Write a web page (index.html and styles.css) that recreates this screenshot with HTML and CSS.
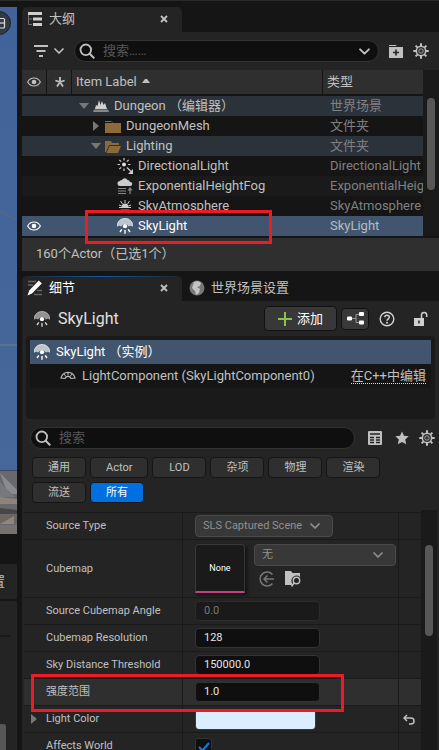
FILE: index.html
```html
<!DOCTYPE html>
<html lang="zh-CN">
<head>
<meta charset="utf-8">
<meta name="viewport" content="width=device-width, initial-scale=1">
<title>大纲</title>
<link rel="stylesheet" href="styles.css">
</head>
<body>
<svg class="defs" aria-hidden="true">
  <symbol id="i-skylight" viewBox="0 0 16 16">
    <path d="M0 8.500C.3 3.500 3.500.5 8 .5s7.700 3 8 8l-2.200-.7-1.800.7-1-.8a3.400 3.400 0 0 0-6 0l-1 .8-1.800-.7z" fill="currentColor" opacity=".65"/>
    <path d="M0 8.500C.3 3.500 3.500.5 8 .5s7.700 3 8 8" fill="none" stroke="currentColor" stroke-width="1" opacity=".7"/>
    <circle cx="8" cy="8.200" r="2.100" fill="#fff"/>
    <path d="M8 12v3.700M4.800 11.300l-1.800 2.700M11.200 11.300l1.800 2.700" stroke="currentColor" stroke-width="1.400"/>
  </symbol>
  <symbol id="i-search" viewBox="0 0 16 16"><circle cx="6.800" cy="6.800" r="5.300" fill="none" stroke="currentColor" stroke-width="1.800"/><path d="M10.700 10.700l4 4" stroke="currentColor" stroke-width="2" stroke-linecap="round"/></symbol>
  <symbol id="i-chevron" viewBox="0 0 10 6"><path d="M1 1l4 4 4-4" fill="none" stroke="currentColor" stroke-width="1.700" stroke-linecap="round" stroke-linejoin="round"/></symbol>
  <symbol id="i-gear" viewBox="0 0 16 16">
    <path d="M8 .3v3M8 12.700v3M.3 8h3M12.700 8h3M2.600 2.600l2 2M11.400 11.400l2 2M2.600 13.400l2-2M11.400 4.600l2-2" stroke="currentColor" stroke-width="2"/>
    <circle cx="8" cy="8" r="4.700" fill="#333" stroke="currentColor" stroke-width="1.500"/><circle cx="8" cy="8" r="2.200" fill="none" stroke="currentColor" stroke-width="1" opacity=".7"/>
  </symbol>
  <symbol id="i-eye" viewBox="0 0 14 10"><path d="M.6 5C3.500-.3 10.500-.3 13.400 5 10.500 10.300 3.500 10.300.6 5z" fill="none" stroke="currentColor" stroke-width="1.100"/><circle cx="7" cy="5" r="2.300" fill="currentColor"/></symbol>
  <symbol id="i-close" viewBox="0 0 8 8"><path d="M1 1l6 6M7 1L1 7" stroke="currentColor" stroke-width="1.900"/></symbol>
</svg>

<div class="app">
  <aside class="side">
    <div class="viewport">
      <button class="view-btn" aria-label="视口布局"><svg width="14" height="14" viewBox="0 0 14 14"><rect x="1.500" y="2.500" width="10" height="9.500" rx="1" fill="none" stroke="#ddd" stroke-width="1.200"/><path d="M2 7h9.500" stroke="#ddd" stroke-width="1.200"/></svg></button>
      <svg class="scene" viewBox="0 0 17 527" preserveAspectRatio="none" aria-hidden="true">
        <path d="M0 204L17 213" stroke="#646970" stroke-width="1"/><path d="M0 338h17" stroke="#60708a" stroke-width="2"/>
        <path d="M0 463h17v64H0z" fill="#68686e"/><path d="M0 463h17v1H0z" fill="#3d4860"/>
        <path d="M0 466l17 17v4H8z" fill="#8a8b91"/><path d="M0 475l15 15H0z" fill="#77777e"/>
        <path d="M0 490l17 2v5H0z" fill="#8d857b"/><path d="M0 501l17 2v4H0z" fill="#4a4643"/>
        <path d="M0 508h17v9H0z" fill="#6b655f"/><path d="M0 517l14-8v8z" fill="#8f857b"/><path d="M0 518h17v9H0z" fill="#777170"/>
      </svg>
    </div>
    <div class="side-title">置</div>
    <div class="side-panel"><div class="side-block"></div><div class="side-thumb"></div></div>
  </aside>

  <main class="main">
    <section class="outliner">
      <div class="tabs">
        <div class="tab">
          <svg width="16" height="16" viewBox="0 0 16 16"><path d="M1 1h14v3H1zM6 6.500h9v3H6zM6 12h9v3H6z" fill="#d0d0d0"/><path d="M1.500 4v9.500H5M1.500 8H5" fill="none" stroke="#777"/></svg>
          <span>大纲</span>
          <button class="close" aria-label="关闭大纲"><svg width="8" height="8"><use href="#i-close"/></svg></button>
        </div>
      </div>
      <div class="toolbar">
        <button class="icon-btn filter" aria-label="筛选"><svg width="16" height="14" viewBox="0 0 16 14"><path d="M1 2h14M3.500 7h9M6 12h4" stroke="currentColor" stroke-width="2"/></svg><svg width="10" height="6"><use href="#i-chevron"/></svg></button>
        <label class="search"><svg width="16" height="16"><use href="#i-search"/></svg><input type="text" placeholder="搜索……" aria-label="搜索大纲"><svg width="11" height="7"><use href="#i-chevron"/></svg></label>
        <button class="icon-btn" aria-label="新建文件夹"><svg width="14" height="14" viewBox="0 0 14 14"><path d="M0 1h7l1 2h6v11H0z" fill="currentColor"/><path d="M0 2.500h8" stroke="#242424"/><path d="M7 5.500v6M4 8.500h6" stroke="#222" stroke-width="1.600"/></svg></button>
        <button class="icon-btn" aria-label="设置"><svg width="16" height="16"><use href="#i-gear"/></svg></button>
      </div>
      <div class="list">
        <table class="actors">
          <thead><tr>
            <th class="c-eye"><svg width="14" height="10"><use href="#i-eye"/></svg></th>
            <th class="c-pin"><svg width="10" height="10" viewBox="0 0 10 10"><path d="M5 0v5M.4 3.500L5 5l4.600-1.500M2 9.500L5 5l3 4.500" fill="none" stroke="currentColor" stroke-width="1.800"/></svg></th>
            <th class="c-label">Item Label <svg class="sort" width="8" height="4" viewBox="0 0 8 4"><path d="M0 4l3-4h2l3 4z" fill="currentColor"/></svg></th>
            <th class="c-type">类型</th>
          </tr></thead>
          <tbody>
            <tr class="group"><td></td><td></td><td><div class="item"><svg width="10" height="6" viewBox="0 0 10 6"><path d="M0 0h10L5 6z" fill="#777"/></svg><svg width="16" height="14" viewBox="0 0 16 14"><path d="M2 10l1-4 1.500 1L6 1l1.500 5L9 2l1.500 4L12 4l2 6z" fill="#d0d0d0"/><path d="M1 10.500h14l1 2.500H0z" fill="#888"/></svg><span>Dungeon （编辑器）</span></div></td><td class="type">世界场景</td></tr>
            <tr><td></td><td></td><td><div class="item lv1"><svg width="10" height="10" viewBox="0 0 10 10"><path d="M2 0l6 5-6 5z" fill="#777"/></svg><svg width="16" height="13" viewBox="0 0 16 13"><path d="M0 1h6l2 2h8v10H0z" fill="#8b6b3c"/><path d="M0 2.500h7" stroke="#151515"/></svg><span>DungeonMesh</span></div></td><td class="type">文件夹</td></tr>
            <tr class="group"><td></td><td></td><td><div class="item lv1"><svg width="10" height="6" viewBox="0 0 10 6"><path d="M0 0h10L5 6z" fill="#777"/></svg><svg width="16" height="13" viewBox="0 0 16 13"><path d="M0 1h6l1 2h7v2H4L1 12H0z" fill="#8b6b3c"/><path d="M4.500 6H16l-3 7H1.500z" fill="#8b6b3c"/></svg><span>Lighting</span></div></td><td class="type">文件夹</td></tr>
            <tr><td></td><td></td><td><div class="item lv2"><svg width="16" height="16" viewBox="0 0 16 16"><circle cx="7" cy="6.500" r="2" fill="#ddd"/><path d="M7 0v2.500M7 10.500v2.500M.5 6.500H3M11 6.500h2.500M2.300 1.800l1.900 1.900M11.700 1.800L9.800 3.700M2.300 11.200l1.900-1.900M10 9.500l4.500 4.500" stroke="#ccc" stroke-width="1.200"/><path d="M16 11v5h-5z" fill="#ccc"/></svg><span>DirectionalLight</span></div></td><td class="type">DirectionalLight</td></tr>
            <tr class="alt"><td></td><td></td><td><div class="item lv2"><svg width="16" height="16" viewBox="0 0 16 16"><path d="M3 8a2.500 2.500 0 0 1 0-5 2 2 0 0 1 2-1 3 3 0 0 1 5.500 0A2.500 2.500 0 0 1 13 4a2 2 0 0 1 .5 4z" fill="#ccc"/><path d="M1 10.500h8M1 13h8M1 15.500h8M13 16v-5" stroke="#888" stroke-width="1.200"/><path d="M10.500 12.500L13 9l2.500 3.500z" fill="#888"/></svg><span>ExponentialHeightFog</span></div></td><td class="type">ExponentialHeightFog</td></tr>
            <tr><td></td><td></td><td><div class="item lv2"><svg width="16" height="16" viewBox="0 0 16 16"><path d="M4.500 9a3.500 3.500 0 0 1 7 0z" fill="#ccc"/><path d="M8 2v3M3.500 3l2 3M12.500 3l-2 3M2 7l2.500 1M14 7l-2.500 1M2 9.500h12" stroke="#ccc" stroke-width="1"/><path d="M4 11.500h8l3 2.500H1z" fill="#999"/></svg><span>SkyAtmosphere</span></div></td><td class="type">SkyAtmosphere</td></tr>
            <tr class="selected"><td class="c-eye"><svg width="14" height="10"><use href="#i-eye"/></svg></td><td></td><td class="marked"><div class="item lv2"><svg width="16" height="16"><use href="#i-skylight"/></svg><span>SkyLight</span></div><i class="mark mark-actor"></i></td><td class="type">SkyLight</td></tr>
          </tbody>
        </table>
        <div class="scroll"><div class="thumb"></div></div>
      </div>
      <div class="status">160个Actor（已选1个）</div>
    </section>

    <section class="details">
      <div class="tabs">
        <div class="tab active">
          <svg width="16" height="16" viewBox="0 0 16 16"><path d="M1 1.500h8M1 5h5M10 10.500h5M7 14.500h8" stroke="#666" stroke-width="1.500"/><path d="M11.800.5l3 3L5 13.500.5 15.500l1.700-5z" fill="#fff"/></svg>
          <span>细节</span>
          <button class="close" aria-label="关闭细节"><svg width="8" height="8"><use href="#i-close"/></svg></button>
        </div>
        <div class="tab idle">
          <svg width="16" height="16" viewBox="0 0 16 16"><circle cx="8" cy="8" r="7.500" fill="#777"/><path d="M5 2l4-1 3 2-1 3-3 1 3 2-1 4-3 2-1-4-3-3z" fill="#c4c4c4"/></svg>
          <span>世界场景设置</span>
        </div>
      </div>
      <div class="object">
        <svg width="16" height="16"><use href="#i-skylight"/></svg>
        <h1>SkyLight</h1>
        <button class="btn add"><svg width="14" height="14" viewBox="0 0 14 14"><path d="M7 0v14M0 7h14" stroke="#8bc34a" stroke-width="2"/></svg>添加</button>
        <button class="btn graph" aria-label="编辑蓝图"><svg width="17" height="13" viewBox="0 0 17 13"><path d="M4 6.500h5M13 2.500H9v8h4" fill="none" stroke="#999"/><rect y="4.500" width="5" height="4" rx="1" fill="#fff"/><rect x="12" width="5" height="4" rx="1" fill="#fff"/><rect x="12" y="8.500" width="5" height="4" rx="1" fill="#fff"/></svg></button>
        <button class="icon-btn help" aria-label="帮助"><svg width="16" height="16" viewBox="0 0 16 16"><circle cx="8" cy="8" r="6.800" fill="none" stroke="currentColor" stroke-width="1.400"/><path d="M5.800 6.300C5.800 3.400 10.300 3.500 10.300 6.200 10.300 7.800 8 7.800 8 9.700" fill="none" stroke="currentColor" stroke-width="1.500"/><circle cx="8" cy="11.800" r="1" fill="currentColor"/></svg></button>
        <button class="icon-btn lock" aria-label="锁定"><svg width="15" height="16" viewBox="0 0 15 16"><path d="M1 7h10v8H1z" fill="currentColor"/><path d="M8.500 7V4a2.600 2.600 0 0 1 5.200 0v2" fill="none" stroke="currentColor" stroke-width="1.500"/><path d="M6 9.500v3" stroke="#222" stroke-width="1.500"/></svg></button>
      </div>
      <div class="components">
        <div class="comp on"><svg width="16" height="16"><use href="#i-skylight"/></svg><span>SkyLight （实例）</span></div>
        <div class="comp child"><svg width="16" height="10" viewBox="0 0 16 10"><path d="M1 7C3-.5 13-.5 15 7l-4 .5a3.200 3.200 0 0 0-6 0z" fill="none" stroke="#bbb" stroke-width="1.100"/><path d="M4 3l2 2.500M8 1.500v3M12 3l-2 2.500" stroke="#bbb"/></svg><span>LightComponent (SkyLightComponent0)</span><a href="#">在C++中编辑</a></div>
      </div>
      <div class="find">
        <label class="search"><svg width="16" height="16"><use href="#i-search"/></svg><input type="text" placeholder="搜索" aria-label="搜索细节"></label>
        <button class="icon-btn" aria-label="属性矩阵"><svg width="14" height="14" viewBox="0 0 14 14"><rect width="14" height="14" rx="1" fill="currentColor"/><path d="M2 3h10M2 6.500h4M8 6.500h4M2 9h4M8 9h4M2 11.500h4M8 11.500h4" stroke="#242424" stroke-width="1.300"/></svg></button>
        <button class="icon-btn" aria-label="收藏"><svg width="14" height="14" viewBox="0 0 14 14"><path d="M7 .5l2 4.300 4.700.5-3.500 3.200 1 4.800L7 11l-4.200 2.300 1-4.800L.3 5.300 5 4.800z" fill="currentColor"/></svg></button>
        <button class="icon-btn" aria-label="细节设置"><svg width="16" height="16"><use href="#i-gear"/></svg></button>
      </div>
      <div class="filters">
        <button>通用</button><button>Actor</button><button>LOD</button><button>杂项</button><button>物理</button><button>渲染</button><button>流送</button><button class="on">所有</button>
      </div>
      <div class="list">
        <table class="props">
          <tbody>
            <tr><th><label for="source">Source Type</label></th><td><div class="combo source"><select id="source"><option>SLS Captured Scene</option></select><svg width="10" height="6"><use href="#i-chevron"/></svg></div></td><td class="reset"></td></tr>
            <tr class="tall"><th><label for="cube">Cubemap</label></th><td><div class="asset"><div class="thumbnail">None</div><div class="asset-side"><div class="combo"><select id="cube"><option>无</option></select><svg width="10" height="6"><use href="#i-chevron"/></svg></div>
              <div class="asset-btns"><button class="icon-btn dim" aria-label="使用所选资产"><svg width="16" height="16" viewBox="0 0 16 16"><path d="M13.500 3.500A7 7 0 1 0 13.500 12.500M15 8H5M8.500 4.500L5 8l3.500 3.500" fill="none" stroke="currentColor" stroke-width="1.500"/></svg></button><button class="icon-btn" aria-label="浏览资产"><svg width="16" height="16" viewBox="0 0 16 16"><path d="M0 0h6l1.500 2H15v4a5 5 0 0 0-7 7.500L6.500 14H0z" fill="currentColor"/><circle cx="11.500" cy="9.500" r="3.200" fill="#242424" stroke="currentColor" stroke-width="1.400"/><path d="M9.200 11.800L6.500 15.500" stroke="currentColor" stroke-width="1.500"/></svg></button></div></div></div></td><td class="reset"></td></tr>
            <tr><th><label for="angle">Source Cubemap Angle</label></th><td><input class="num" id="angle" type="text" value="0.0" disabled></td><td class="reset"></td></tr>
            <tr><th><label for="res">Cubemap Resolution</label></th><td><input class="num" id="res" type="text" value="128"></td><td class="reset"></td></tr>
            <tr><th><label for="dist">Sky Distance Threshold</label></th><td><input class="num" id="dist" type="text" value="150000.0"></td><td class="reset"></td></tr>
            <tr class="hover"><th class="marked"><label for="intensity">强度范围</label><i class="mark mark-prop"></i></th><td><input class="num" id="intensity" type="text" value="1.0"></td><td class="reset"></td></tr>
            <tr><th class="expand"><svg width="6" height="10" viewBox="0 0 6 10"><path d="M0 0l6 5-6 5z" fill="#777"/></svg><label for="color">Light Color</label></th><td><input class="color" id="color" type="color" value="#dbeeff"></td><td class="reset"><button class="icon-btn" aria-label="重置"><svg width="12" height="11" viewBox="0 0 12 11"><path d="M4 1L1 4l3 3M1 4h7a3 3 0 0 1 0 6H6" fill="none" stroke="currentColor" stroke-width="1.500"/></svg></button></td></tr>
            <tr><th><label for="world">Affects World</label></th><td><div class="check"><input id="world" type="checkbox" checked><svg width="12" height="10" viewBox="0 0 12 10"><path d="M1 5l3.500 3.500L11 1" fill="none" stroke="#0c78e8" stroke-width="2.200"/></svg></div></td><td class="reset"></td></tr>
          </tbody>
        </table>
        <div class="scroll"><div class="thumb"></div></div>
      </div>
    </section>
  </main>
</div>
</body>
</html>
```

FILE: styles.css
```css
* { box-sizing: border-box; }

body {
  margin: 0;
  background: #151515;
  color: #c0c0c0;
  font: 13px/20px Roboto, "Noto Sans CJK SC", sans-serif;
}

button, input, select { font: inherit; color: inherit; }
button { border: 0; padding: 0; background: none; }
svg { display: block; flex: none; }
.defs { position: absolute; width: 0; height: 0; }

.app {
  display: flex;
  gap: 5px;
  height: 100vh;
  padding-top: 6px;
  border-top: 1px solid #2a2a2a;
  overflow: hidden;
}

/* Left neighbour: viewport and the panel below it */
.side { flex: 0 0 17px; display: flex; flex-direction: column; overflow: hidden; }
.viewport { position: relative; height: 527px; flex: none; background: linear-gradient(#41639a, #466899); }
.scene { width: 100%; height: 100%; }
.view-btn {
  position: absolute;
  top: 4px;
  left: -13px;
  display: flex;
  align-items: center;
  justify-content: flex-end;
  width: 24px;
  height: 24px;
  padding-right: 3px;
  border: 1px solid #1c222c;
  border-radius: 50%;
  background: #343a44;
}
.side-title {
  display: flex;
  flex: none;
  align-items: center;
  justify-content: flex-end;
  height: 35px;
  margin-top: 30px;
  padding-right: 12px;
  background: #242424;
}
.side-panel { display: flex; flex-direction: column; justify-content: space-between; flex: 1; margin-top: 2px; background: #242424; }
.side-block { width: 10px; height: 36px; border-bottom: 2px solid #181818; }
.side-thumb { width: 6px; height: 26px; border-radius: 0 3px 0 0; background: #575757; }

/* Panels */
.main { flex: 1; min-width: 0; display: flex; flex-direction: column; gap: 5px; }
.details { flex: 1; background: #242424; }
.tabs { display: flex; height: 25px; background: #151515; }
.tab {
  display: flex;
  align-items: center;
  gap: 6px;
  width: 160px;
  padding: 0 14px 2px 5px;
  border-radius: 5px 5px 0 0;
  background: #242424;
}
.tab.active { color: #fff; background: linear-gradient(90deg, #242424, #0d5cab 50%, #242424) top / 100% 1px no-repeat #242424; }
.tab.idle { width: auto; padding-left: 7px; background: none; }
.close { margin-left: auto; color: #c0c0c0; }

.icon-btn { display: flex; align-items: center; }
.icon-btn.dim { color: #777; }
.toolbar {
  display: flex;
  align-items: center;
  gap: 10px;
  height: 38px;
  padding: 0 10px 0 11px;
  background: #242424;
}
.toolbar .filter { gap: 5px; }
.search {
  display: flex;
  flex: 1;
  align-items: center;
  gap: 8px;
  min-width: 0;
  height: 22px;
  padding: 0 8px 0 4px;
  border: 1px solid #333;
  border-radius: 11px;
  background: #0f0f0f;
}
.search input { flex: 1; min-width: 0; padding: 0; border: 0; outline: 0; background: none; }
.search input::placeholder { color: #585858; opacity: 1; }

.list { display: flex; }
.scroll { flex: 0 0 16px; padding-left: 4px; background: #1a1a1a; }
.thumb { width: 8px; border-radius: 4px; background: #575757; }
.outliner .thumb { height: 92px; margin-top: 28px; }

table { flex: 1; min-width: 0; width: 100%; table-layout: fixed; border-collapse: separate; border-spacing: 0; }
th, td { padding: 0; font-weight: 400; text-align: left; white-space: nowrap; }

/* Actor list */
.outliner > .list { padding-bottom: 2px; }
.actors { background: #151515; }
.actors tr { height: 20px; }
.actors thead th { height: 26px; border-bottom: 2px solid #151515; background: #2f2f2f; }
.actors thead th + th { border-left: 1px solid #151515; }
.actors .c-eye { width: 24px; padding-left: 5px; }
.actors .c-pin { width: 25px; padding-left: 8px; }
.actors .c-label { padding-left: 4px; }
.actors .c-type { width: 101px; padding-left: 4px; }
.sort { display: inline-block; vertical-align: 3px; margin-left: 2px; }
.actors .type { padding-left: 8px; overflow: hidden; color: #808080; }
.actors .group { background: #2b323a; }
.actors .alt { background: #1a1a1a; }
.actors .selected { background: #41566e; color: #fff; }
.actors .selected .type { color: #b4bcc6; }
.item { display: flex; align-items: center; gap: 4px; height: 20px; padding-left: 8px; }
.item span { margin-left: 1px; }
.item.lv1 { padding-left: 20px; }
.item.lv2 { padding-left: 46px; }
.status { height: 33px; padding: 6px 14px; background: #2f2f2f; }

/* Red callouts drawn over the rows */
.marked { position: relative; }
.mark { position: absolute; z-index: 2; border: 3px solid #ed1c24; pointer-events: none; }
.mark-actor { top: -6px; left: 14px; right: 50px; height: 34px; }
.mark-prop { top: -5px; left: 7px; width: 313px; height: 38px; }

/* Selected object */
.object { display: flex; align-items: center; height: 35px; padding: 0 11px 0 12px; color: #d0d0d0; }
h1 { flex: 1; margin: 0 0 0 8px; font-size: 16px; font-weight: 400; color: #e0e0e0; }
.btn { display: flex; align-items: center; justify-content: center; gap: 5px; border: 1px solid #111; border-radius: 4px; background: #383838; color: #fff; }
.add { width: 73px; height: 25px; }
.graph { width: 28px; height: 22px; margin-left: 4px; }
.help { margin-left: 10px; }
.lock { margin-left: 18px; }

.components { height: 83px; margin: 0 4px; padding: 4px; border-radius: 4px; background: #1a1a1a; }
.comp { display: flex; align-items: center; gap: 6px; height: 24px; padding: 0 5px 0 4px; background: #151515; }
.comp.on { background: #41566e; color: #fff; }
.comp.child { padding-left: 30px; }
.comp a { margin-left: auto; line-height: 15px; color: inherit; text-decoration: none; border-bottom: 1px dotted #ddd; }

.find { display: flex; align-items: center; gap: 13px; height: 38px; padding: 0 4px 0 8px; }
.find .icon-btn:last-child { margin-left: -3px; }

.filters { display: flex; flex-wrap: wrap; gap: 4px; padding: 0 10px 7px; font-size: 11px; }
.filters button { min-width: 54px; height: 21px; padding: 0 15px; line-height: 18px; border: 1px solid #151515; border-radius: 4px; background: #2f2f2f; }
.filters .on { background: #0070e0; color: #fff; }

/* Properties */
.details > .list { padding: 0 2px; }
.details .thumb { height: 91px; margin-top: 35px; }
.props { margin-top: 2px; font-size: 11px; }
.props th, .props td { height: 27px; border-top: 1px solid #1a1a1a; vertical-align: middle; }
.props th { width: 158px; padding-left: 22px; }
.props td { padding-left: 12px; border-left: 1px solid #1a1a1a; }
.props .reset { width: 23px; padding-left: 4px; }
.props .tall > * { height: 58px; }
.props .hover { background: #2f2f2f; }
.props .expand { padding-left: 7px; }
.expand svg { display: inline-block; vertical-align: middle; margin-right: 9px; }
.num { display: block; width: 125px; height: 20px; padding: 0 8px; border: 1px solid #333; border-radius: 4px; background: #0f0f0f; color: #e4e4e4; }
.num:disabled { background: #1a1a1a; border-color: #2b2b2b; color: #777; }
.combo { position: relative; height: 22px; color: #909090; }
.combo.source { width: 138px; }
.combo select { display: block; width: 100%; height: 100%; padding: 0 7px; border: 1px solid #4a4a4a; border-radius: 4px; background: #383838; appearance: none; }
.combo svg { position: absolute; top: 8px; right: 13px; pointer-events: none; }
.asset { display: flex; gap: 9px; padding-right: 2px; }
.thumbnail {
  display: flex;
  align-items: center;
  justify-content: center;
  width: 50px;
  height: 49px;
  border: 1px solid #383838;
  border-bottom: 2px solid #c6407f;
  border-radius: 4px 4px 0 0;
  background: #1a1a1a;
  color: #fff;
  font-size: 9px;
  box-shadow: 2px 2px 3px #111;
}
.asset-side { flex: 1; }
.asset-btns { display: flex; gap: 10px; padding: 5px; }
.color { display: block; width: 121px; height: 21px; padding: 0; border: 1px solid #383838; border-radius: 4px; background: none; overflow: hidden; }
.color::-webkit-color-swatch-wrapper { padding: 0; }
.color::-webkit-color-swatch { border: 0; }
.check { position: relative; width: 17px; height: 17px; }
.check input { display: block; width: 17px; height: 17px; margin: 0; border: 1px solid #333; border-radius: 3px; background: #0f0f0f; appearance: none; }
.check svg { position: absolute; top: 4px; left: 3px; pointer-events: none; }
```
